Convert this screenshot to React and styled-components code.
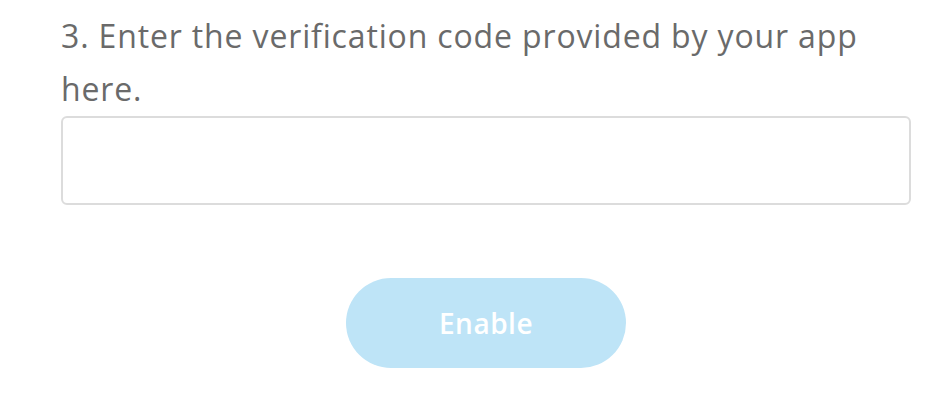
import React from "react";
import styled, { createGlobalStyle } from "styled-components";

const GlobalStyle = createGlobalStyle`
  body {
    margin: 0;
    background: #ffffff;
    font-family: "Open Sans", Lato, sans-serif;
  }
`;

const Page = styled.div`
  width: 850px;
  padding-left: 61px;
  padding-top: 9px;
`;

const Step = styled.p`
  margin: 0;
  font-size: 32px;
  line-height: 53px;
  letter-spacing: 0.85px;
  color: #6a6a6a;
`;

const CodeInput = styled.input`
  display: block;
  box-sizing: border-box;
  width: 100%;
  height: 89px;
  margin-top: 1px;
  border: 2px solid #dcdcdc;
  border-radius: 6px;
  background: #fff;
  font-size: 28px;
  padding: 0 16px;
  outline: none;
`;

const Actions = styled.div`
  display: flex;
  justify-content: center;
  margin-top: 73px;
`;

const Button = styled.button`
  width: 280px;
  height: 90px;
  border: none;
  border-radius: 45px;
  background: #bee4f7;
  color: #ffffff;
  font-family: "Open Sans", Lato, sans-serif;
  font-size: 28px;
  font-weight: 600;
  letter-spacing: 0.5px;
  cursor: default;
`;

export default function App() {
  return (
    <Page>
      <GlobalStyle />
      <Step>3. Enter the verification code provided by your app here.</Step>
      <CodeInput type="text" />
      <Actions>
        <Button disabled>Enable</Button>
      </Actions>
    </Page>
  );
}
